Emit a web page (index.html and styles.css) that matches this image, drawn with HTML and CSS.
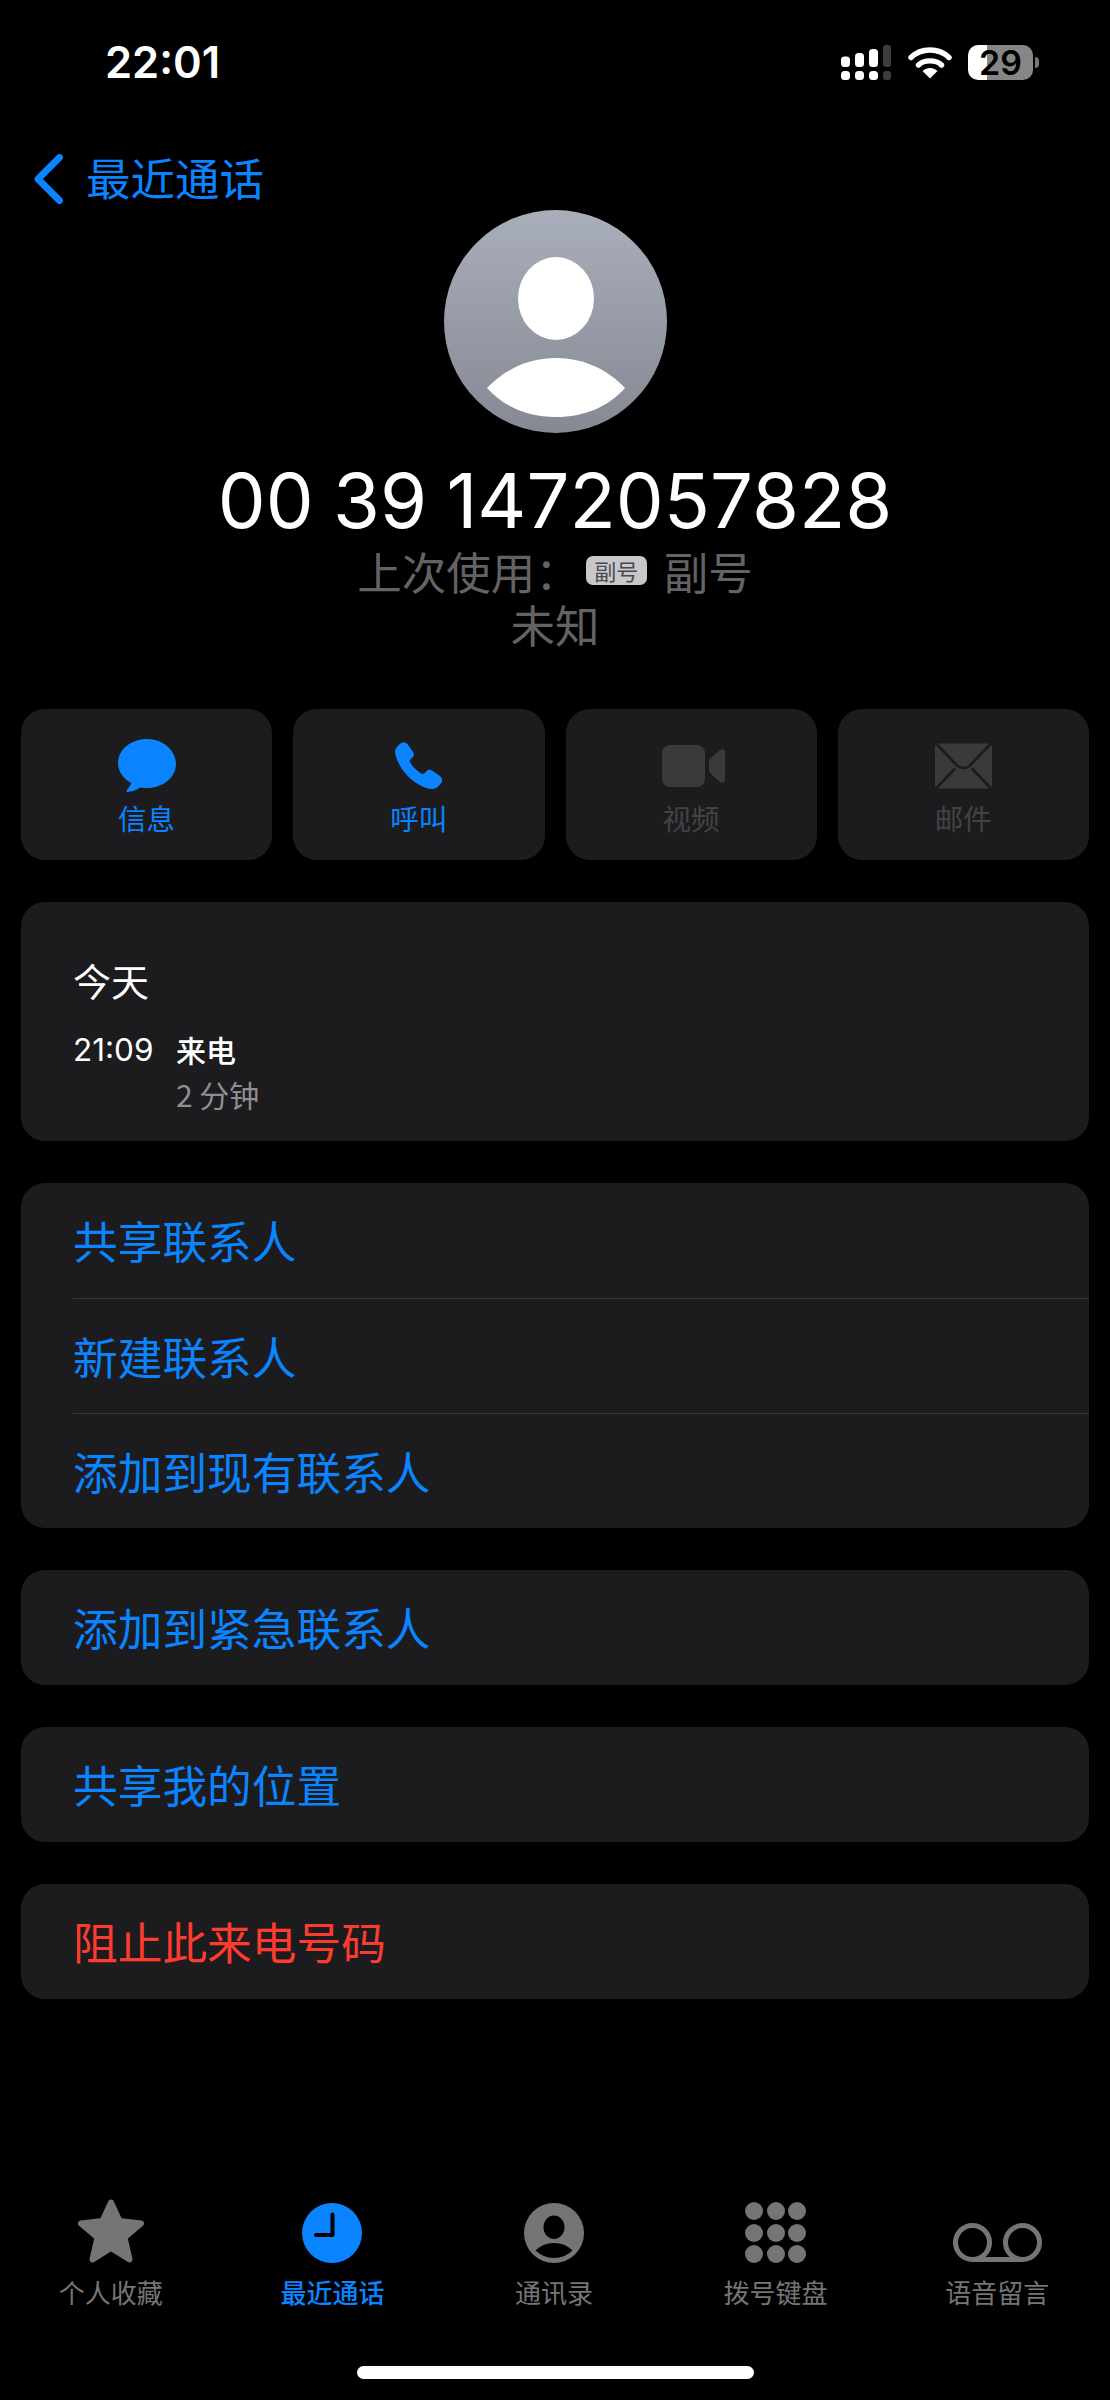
FILE: index.html
```html
<!DOCTYPE html>
<html lang="zh-CN">
<head>
<meta charset="utf-8">
<title>最近通话</title>
<link rel="stylesheet" href="styles.css">
</head>
<body>
<main class="screen">
  <header class="status">
    <span class="clock">22:01</span>
    <div class="status-icons">
      <svg class="signal" viewBox="0 0 50 35" width="50" height="35">
        <g fill="#fff">
          <rect x="0" y="11.500" width="9" height="10.500" rx="3.500"/>
          <rect x="14" y="8" width="9" height="14" rx="3.500"/>
          <rect x="28" y="4" width="9" height="18" rx="3.500"/>
          <rect x="0" y="26" width="9" height="9" rx="3.500"/>
          <rect x="14" y="26" width="9" height="9" rx="3.500"/>
          <rect x="28" y="26" width="9" height="9" rx="3.500"/>
        </g>
        <g fill="#3e3e40">
          <rect x="42" y="0" width="8" height="22" rx="3"/>
          <rect x="42" y="26" width="8" height="9" rx="3"/>
        </g>
      </svg>
      <svg class="wifi" viewBox="0 0 44 33" width="44" height="33">
        <path d="M3 11.500C13 1.500 31 1.500 41 11.500M10.500 19C16 13.500 28 13.500 33.500 19" fill="none" stroke="#fff" stroke-width="5.400" stroke-linecap="round"/>
        <path d="M22 32.500L14.500 25C19 21 25 21 29.500 25Z" fill="#fff"/>
      </svg>
      <div class="battery"><span class="battery-level">29</span><i class="battery-tip"></i></div>
    </div>
  </header>

  <nav class="nav">
    <svg class="chevron" viewBox="0 0 30 50" width="30" height="50"><path d="M26.500 3.500L5 25L26.500 46.500" fill="none" stroke="#0a84ff" stroke-width="6.800" stroke-linecap="round" stroke-linejoin="round"/></svg>
    <span class="nav-title">最近通话</span>
  </nav>

  <section class="hero">
    <svg class="avatar" viewBox="0 0 223 223" width="223" height="223">
      <defs>
        <linearGradient id="avatarFill" x1="0" y1="0" x2="0" y2="1">
          <stop offset="0" stop-color="#a9aebb"/>
          <stop offset="1" stop-color="#858993"/>
        </linearGradient>
      </defs>
      <circle cx="111.500" cy="111.500" r="111.500" fill="url(#avatarFill)"/>
      <ellipse cx="112" cy="88.500" rx="38" ry="41.500" fill="#fff"/>
      <path d="M43 178C60 160 84 148 112 148C140 148 164 160 181 178C164 197 140 207 112 207C84 207 60 197 43 178Z" fill="#fff"/>
    </svg>
    <h1 class="number">00 39 1472057828</h1>
    <p class="sub sub-line"><span>上次使用：</span><span class="sim">副号</span><span>副号</span></p>
    <p class="sub">未知</p>
  </section>

  <section class="actions">
    <div class="action">
      <svg width="58" height="54" viewBox="0 0 58 54"><path d="M29 0C13 0 0 10.700 0 24c0 8.400 5.200 15.800 13.200 20.100-.9 3-3 5.600-4.600 7.300-.6.700-.1 1.900.9 1.700 4.600-.7 9.600-2.500 13-4.700 2.100.4 4.300.6 6.500.6 16 0 29-10.700 29-24S45 0 29 0z" fill="#0a84ff"/></svg>
      <span class="action-label">信息</span>
    </div>
    <div class="action">
      <svg width="48" height="48" viewBox="0 0 48 48"><path d="M4 3C6 0 10-.5 12 1.500L18 10C19.500 12 19 14 17.500 15.500L15 18C14.500 18.700 14.500 19.500 15 20.300C17 24 22.500 29.500 26.500 31.800C27.500 32.300 28.300 32.200 29 31.600L31.500 29.200C33 27.800 35 27.300 37 28.600L45.500 34.600C47.500 36.200 47.500 39.500 45.500 42C43 45.500 39.500 47.500 36 47C25 45.500 15 37.500 8 28.500C3 21.500 0 14 0 9.500C0 7 2 4.500 4 3Z" fill="#0a84ff"/></svg>
      <span class="action-label">呼叫</span>
    </div>
    <div class="action action-off action-video">
      <svg width="63" height="42" viewBox="0 0 63 42"><rect width="43" height="42" rx="8" fill="#3a3a3c"/><path d="M47 16C47 15 47.500 14.300 48 13.800L58 5C60 3.500 63 4.500 63 7V35C63 37.500 60 38.500 58 37L48 28C47.500 27.500 47 27 47 26Z" fill="#3a3a3c"/></svg>
      <span class="action-label">视频</span>
    </div>
    <div class="action action-off">
      <svg width="57" height="45" viewBox="0 0 57 45"><rect width="57" height="45" rx="3" fill="#3a3a3c"/><path d="M0-1L22 22Q28.500 27 35 22L57-1M0 46L20 25M57 46L37 25" fill="none" stroke="#1c1c1e" stroke-width="2.800"/></svg>
      <span class="action-label">邮件</span>
    </div>
  </section>

  <section class="card history">
    <div class="history-day">今天</div>
    <div class="history-row">
      <span class="history-time">21:09</span>
      <div class="history-detail">
        <div class="history-type">来电</div>
        <div class="history-length">2 分钟</div>
      </div>
    </div>
  </section>

  <ul class="card menu">
    <li class="row"><span class="row-inner">共享联系人</span></li>
    <li class="row"><span class="row-inner">新建联系人</span></li>
    <li class="row"><span class="row-inner">添加到现有联系人</span></li>
  </ul>
  <ul class="card menu">
    <li class="row"><span class="row-inner">添加到紧急联系人</span></li>
  </ul>
  <ul class="card menu">
    <li class="row"><span class="row-inner">共享我的位置</span></li>
  </ul>
  <ul class="card menu">
    <li class="row row-danger"><span class="row-inner">阻止此来电号码</span></li>
  </ul>

  <footer class="tabs">
    <div class="tab">
      <span class="tab-icon"><svg width="66" height="64" viewBox="0 0 66 64"><polygon points="33,3.500 41.500,22 63,24.500 46.500,38.500 51.500,60.500 33,49 14.500,60.500 19.500,38.500 3,24.500 24.500,22" fill="#757575" stroke="#757575" stroke-width="6" stroke-linejoin="round"/></svg></span>
      <span class="tab-label">个人收藏</span>
    </div>
    <div class="tab tab-active">
      <span class="tab-icon"><svg width="60" height="60" viewBox="0 0 60 60"><circle cx="30" cy="30" r="30" fill="#0a84ff"/><path d="M30.500 11.500V32H14" fill="none" stroke="#000" stroke-width="4" stroke-linecap="round" stroke-linejoin="round"/></svg></span>
      <span class="tab-label">最近通话</span>
    </div>
    <div class="tab">
      <span class="tab-icon"><svg width="60" height="60" viewBox="0 0 60 60"><circle cx="30" cy="30" r="30" fill="#757575"/><ellipse cx="30" cy="24.300" rx="10.500" ry="11.700" fill="#000"/><path d="M11.500 47.500C16 43 22 40 30 40S44 43 48.500 47.500C44 52 37 55 30 55S16 52 11.500 47.500Z" fill="#000"/></svg></span>
      <span class="tab-label">通讯录</span>
    </div>
    <div class="tab">
      <span class="tab-icon"><span class="keypad"><i></i><i></i><i></i><i></i><i></i><i></i><i></i><i></i><i></i></span></span>
      <span class="tab-label">拨号键盘</span>
    </div>
    <div class="tab">
      <span class="tab-icon"><svg width="89" height="40" viewBox="0 0 89 40"><path d="M19.500 36.500H69.500" stroke="#757575" stroke-width="5"/><circle cx="19.500" cy="19.500" r="17" fill="none" stroke="#757575" stroke-width="5"/><circle cx="69.500" cy="19.500" r="17" fill="none" stroke="#757575" stroke-width="5"/></svg></span>
      <span class="tab-label">语音留言</span>
    </div>
  </footer>
  <div class="home-bar"></div>
</main>
</body>
</html>
```
FILE: styles.css
```css
* { box-sizing: border-box; }

html, body { margin: 0; background: #000; }

.screen {
  width: 1110px;
  height: 2400px;
  display: flex;
  flex-direction: column;
  overflow: hidden;
  color: #fff;
  font-family: "Noto Sans CJK SC", sans-serif;
}

/* status bar */
.status {
  display: flex;
  justify-content: space-between;
  align-items: center;
  height: 35px;
  margin-top: 45px;
  padding: 0 77px 0 105px;
}
.clock {
  font-family: Inter, sans-serif;
  font-weight: 600;
  font-size: 43.500px;
  line-height: 35px;
}
.status-icons { display: flex; align-items: center; }
.signal { display: block; }
.wifi { display: block; margin-left: 17px; }
.battery {
  position: relative;
  display: flex;
  align-items: center;
  justify-content: center;
  width: 65px;
  height: 35px;
  margin-left: 16px;
  border-radius: 10px;
  background: linear-gradient(90deg, #fff 19px, #868686 19px);
}
.battery-level {
  font-family: Inter, sans-serif;
  font-weight: 600;
  font-size: 34px;
  line-height: 35px;
  color: #000;
}
.battery-tip {
  position: absolute;
  right: -6px;
  top: 12px;
  width: 4px;
  height: 11px;
  border-radius: 0 4px 4px 0;
  background: #777;
}

/* back link */
.nav {
  display: flex;
  align-items: center;
  height: 50px;
  margin-top: 74px;
  padding-left: 33px;
}
.chevron { display: block; }
.nav-title {
  margin: -5px 0 0 23px;
  font-size: 44.500px;
  line-height: 50px;
  color: #0a84ff;
}

/* caller summary */
.hero {
  display: flex;
  flex-direction: column;
  align-items: center;
  margin-top: 6px;
}
.avatar { display: block; }
.number {
  margin: 33px 0 10px;
  font-family: Inter, sans-serif;
  font-weight: 400;
  font-size: 76px;
  line-height: 68px;
  word-spacing: -2px;
  white-space: nowrap;
}
.sub {
  margin: 0;
  font-size: 44.500px;
  line-height: 53px;
  color: #636366;
}
.sub-line {
  display: flex;
  align-items: center;
}
.sim {
  display: flex;
  align-items: center;
  justify-content: center;
  width: 61px;
  height: 29px;
  margin: 0 17px 0 6px;
  border-radius: 7px;
  background: #c7c7cc;
  color: #4a4a4c;
  font-size: 22px;
  line-height: 29px;
}

/* quick actions */
.actions {
  display: grid;
  grid-template-columns: repeat(4, 1fr);
  gap: 21px;
  margin-top: 59px;
  padding: 0 21px;
}
.action {
  display: flex;
  flex-direction: column;
  align-items: center;
  height: 151px;
  border-radius: 24px;
  background: #1c1c1e;
  color: #0a84ff;
}
.action svg { display: block; height: 54px; margin-top: 30px; }
.action-off { color: #434345; }
.action-video svg { margin-left: 5px; }
.action-label {
  margin-top: 4.500px;
  font-size: 28.500px;
  line-height: 40px;
}

/* grouped cards */
.card {
  margin: 42px 21px 0;
  padding: 0;
  list-style: none;
  border-radius: 24px;
  background: #1c1c1e;
}

.history {
  height: 239px;
  padding: 51px 52px 0;
}
.history-day {
  font-size: 38px;
  line-height: 54px;
}
.history-row {
  display: flex;
  margin-top: 22px;
}
.history-time {
  width: 103px;
  font-family: Inter, sans-serif;
  font-weight: 400;
  font-size: 31.500px;
  line-height: 42px;
}
.history-type {
  font-size: 30px;
  font-weight: 500;
  line-height: 40px;
}
.history-length {
  margin-top: 5px;
  font-size: 30px;
  line-height: 40px;
  color: #8e8e93;
}

.menu .row {
  height: 115px;
  padding-left: 52px;
  font-size: 44.700px;
  color: #0a84ff;
}
.row-inner {
  display: flex;
  align-items: center;
  height: 100%;
  padding-bottom: 2px;
  border-top: 1px solid #38383a;
}
.row:first-child .row-inner { border-top: 0; }
.menu .row-danger { color: #ff3b30; }

/* tab bar */
.tabs {
  display: grid;
  grid-template-columns: repeat(5, 1fr);
  margin-top: auto;
  padding-right: 2px;
}
.tab {
  display: flex;
  flex-direction: column;
  align-items: center;
  color: #757575;
}
.tab-active { color: #0a84ff; }
.tab-icon {
  display: flex;
  align-items: flex-end;
  justify-content: center;
  height: 64px;
}
.tab-icon svg { display: block; }
.tab-label {
  margin-top: 12.500px;
  font-size: 26px;
  line-height: 32px;
}
.tab-active .tab-label { font-weight: 500; }

.keypad {
  display: grid;
  grid-template-columns: repeat(3, 18px);
  grid-auto-rows: 18px;
  gap: 3.500px;
}
.keypad i {
  border-radius: 50%;
  background: #757575;
}

.home-bar {
  align-self: center;
  width: 397px;
  height: 13px;
  margin: 58.500px 0 21px;
  border-radius: 7px;
  background: #fff;
}
```
